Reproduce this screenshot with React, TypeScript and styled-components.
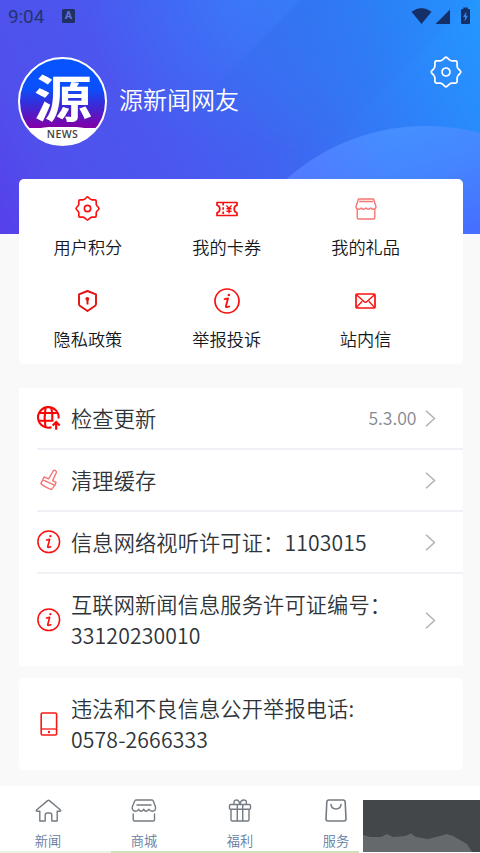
import React from "react";
import styled, { createGlobalStyle } from "styled-components";

const GlobalStyle = createGlobalStyle`
  * { box-sizing: border-box; }
  html, body { margin: 0; padding: 0; overflow: hidden; }
  body { font-family: "Noto Sans CJK SC", "Noto Sans", sans-serif; font-weight: 350; }
  svg { display: block; overflow: visible; }
`;

const Screen = styled.div`
  width: 480px;
  height: 853px;
  display: flex;
  flex-direction: column;
  background: #f9f9f9;
  overflow: hidden;
  position: relative;
`;

const Header = styled.header`
  position: relative;
  flex: none;
  height: 234px;
  overflow: hidden;
  background:
    radial-gradient(ellipse 150px 150px at 240px 0, rgba(60, 128, 255, 0.5), transparent 100%),
    linear-gradient(62deg, #5640ea 0%, #5050ec 14%, #4c56ef 32%, #4262f0 50%, #3576f4 68%, #2b87fb 84%, #2398ff 100%);
  &::before {
    content: "";
    position: absolute;
    inset: 0;
    background: linear-gradient(135deg, transparent 42%, rgba(40, 100, 225, 0.24) 42.4%, rgba(50, 100, 235, 0.08) 66%, transparent 66.8%);
    mask-image: linear-gradient(to top right, transparent 45%, #000 75%);
  }
`;

const Wave = styled.div`
  position: absolute;
  left: 216px;
  top: 126px;
  width: 420px;
  height: 420px;
  border-radius: 50%;
  background: linear-gradient(166deg, #4398ff 0, #4586ff 18%, #456fff 32%);
  &::after {
    content: "";
    position: absolute;
    inset: 0;
    border-radius: 50%;
    background: linear-gradient(90deg, rgba(96, 104, 255, 0.55) 15%, transparent 42%);
  }
`;

const StatusBar = styled.div`
  position: relative;
  height: 34px;
  padding: 0 9px 0 8px;
  display: flex;
  align-items: center;
  color: #253370;
`;

const Clock = styled.span`
  font: 400 19px/34px Roboto, sans-serif;
  width: 54px;
  letter-spacing: -0.1px;
`;

const KeyboardBadge = styled.span`
  width: 13px;
  height: 14px;
  margin-top: -2px;
  border-radius: 1.5px;
  background: #203064;
  color: #6673dd;
  font: 700 11px/14px Roboto, sans-serif;
  text-align: center;
`;

const Signals = styled.div`
  margin-left: auto;
  margin-top: -3px;
`;

const Profile = styled.div`
  position: relative;
  display: flex;
  align-items: flex-start;
  padding: 23px 18px 0 18px;
`;

const Avatar = styled.div`
  flex: none;
  width: 89px;
  height: 89px;
  border: 2px solid #fff;
  border-radius: 50%;
  overflow: hidden;
  background:
    radial-gradient(ellipse 120px 30px at 50% 98px, #fff 0 99%, transparent 100%),
    linear-gradient(#0754ff 0%, #0950fb 34%, #3b2ad6 55%, #8000a8 80%);
  display: flex;
  flex-direction: column;
  align-items: center;
`;

const LogoGlyph = styled.span`
  color: #fff;
  font-weight: 700;
  font-size: 50px;
  line-height: 48px;
  height: 48px;
  margin: 12px 0 9px;
  transform: scaleX(1.16);
`;

const LogoCaption = styled.span`
  color: #444;
  font: 600 10.5px/12px "Open Sans", sans-serif;
  letter-spacing: 0.4px;
`;

const UserName = styled.span`
  margin: 28px 0 0 12px;
  font-size: 24px;
  line-height: 28px;
  color: #fff;
`;

const SettingsButton = styled.button`
  all: unset;
  margin: -1px 0 0 auto;
`;

const Content = styled.main`
  position: relative;
  flex: none;
  margin-top: -55px;
  padding: 0 17.5px 0 18.5px;
  height: 606.5px;
`;

const ShortcutCard = styled.section`
  height: 185px;
  padding-right: 27.5px;
  border-radius: 5px;
  background: #fff;
  display: grid;
  grid-template-columns: repeat(3, 1fr);
  grid-template-rows: 92.5px 92.5px;
`;

const Shortcut = styled.div`
  display: flex;
  flex-direction: column;
  align-items: center;
  padding-top: 13.6px;
  gap: 9px;
  color: #14181c;
  font-size: 17.2px;
  line-height: 26px;
`;

const IconBox = styled.span<{ $width: number; $height: number }>`
  flex: none;
  width: ${(p) => p.$width}px;
  height: ${(p) => p.$height}px;
  display: grid;
  place-items: center;
`;

const ListCard = styled.section<{ $gap: number; $radius: number }>`
  margin-top: ${(p) => p.$gap}px;
  padding-left: 18.5px;
  border-radius: ${(p) => p.$radius}px;
  background: #fff;
`;

const Row = styled.div<{ $height: number; $last?: boolean }>`
  height: ${(p) => p.$height}px;
  display: flex;
  align-items: center;
  padding-right: 27px;
  border-bottom: ${(p) => (p.$last ? "0" : "2px solid #f0f1f7")};
`;

const RowLabel = styled.span`
  flex: 1;
  margin-left: 10px;
  padding-bottom: 2px;
  white-space: pre-line;
  color: #2e3438;
  font-size: 21.2px;
  line-height: 31px;
  letter-spacing: 0.15px;
`;

const Version = styled.span`
  margin-right: 8px;
  padding-bottom: 1px;
  color: #85898e;
  font-size: 17.6px;
`;

const TabBar = styled.nav`
  position: relative;
  height: 67.5px;
  background: #fff;
  display: grid;
  grid-template-columns: repeat(5, 96px);
`;

const Tab = styled.div`
  display: flex;
  flex-direction: column;
  align-items: center;
  padding-top: 12.5px;
  gap: 6.5px;
  font-size: 13.2px;
  line-height: 20px;
  color: #647ba0;
`;

const BottomEdge = styled.div`
  position: absolute;
  left: 0;
  bottom: 0;
  width: 359px;
  height: 2px;
  background: linear-gradient(90deg, #edf1e2 111px, #cfdfb7 111px);
`;

const GraphOverlay = styled.div`
  position: absolute;
  left: 363px;
  top: 800px;
  width: 117px;
  height: 52px;
  background: #434749;
`;

type Draw = { color?: string; size?: number; weight?: number };

const Gear = ({ color = "#fa1010", size = 25, weight = 2.1 }: Draw) => (
  <svg width={size} height={size} viewBox="-16 -16 32 32" fill="none" stroke={color} strokeWidth={weight} strokeLinejoin="round">
    <path d="M-1.3-14.1Q0-15.4 1.3-14.1L3.2-12.3Q4.6-11.1 6-11.1H9.6Q11.1-11.1 11.1-9.6V-6Q11.1-4.6 12.3-3.2L14.1-1.3Q15.4 0 14.1 1.3L12.3 3.2Q11.1 4.6 11.1 6V9.6Q11.1 11.1 9.6 11.1H6Q4.6 11.1 3.2 12.3L1.3 14.1Q0 15.4-1.3 14.1L-3.2 12.3Q-4.6 11.1-6 11.1H-9.6Q-11.1 11.1-11.1 9.6V6Q-11.1 4.6-12.3 3.2L-14.1 1.3Q-15.4 0-14.1-1.3L-12.3-3.2Q-11.1-4.6-11.1-6V-9.6Q-11.1-11.1-9.6-11.1H-6Q-4.6-11.1-3.2-12.3Z" />
    <circle r="4" />
  </svg>
);

const Ticket = () => (
  <svg width="22" height="16" viewBox="0 0 22 16" fill="none" stroke="#f61010" strokeWidth="1.7" strokeLinejoin="round">
    <path d="M1 1.5H21V4.3Q18.2 5 18.2 8T21 11.7V14.5H1V11.7Q3.8 11 3.8 8T1 4.3Z" />
    <path d="M7.2 2V14" strokeDasharray="2.6 1.6" />
    <path d="M10.4 4.4L13 7.5L15.6 4.4M13 7.5V12.5M10.5 7.8H15.5M10.5 10.2H15.5" strokeWidth="1.4" />
  </svg>
);

const GiftShop = () => (
  <svg width="22" height="22" viewBox="0 0 22 22" fill="none" stroke="#f77676" strokeWidth="1.4" strokeLinejoin="round">
    <path d="M3.5 1H18.5L21 8.5Q21 11.2 18.4 11.2Q16.6 11.2 15.8 10Q14.5 11.5 13 11.2Q12 11 11 10Q9.7 11.5 8 11.2Q7 11 6.2 10Q5 11.3 3.4 11.2Q1 11 1 8.5Z" />
    <path d="M4.2 3.5H18M2.2 11.2V19.5Q2.2 21 3.7 21H18.3Q19.8 21 19.8 19.5V11.2" />
  </svg>
);

const Shield = () => (
  <svg width="19" height="22" viewBox="0 0 19 22" fill="none" stroke="#e01212" strokeWidth="1.9" strokeLinejoin="round">
    <path d="M9.5 1L18 4.3V14Q18 15 17.2 15.7L9.5 21L1.8 15.7Q1 15 1 14V4.3Z" />
    <path d="M9.5 8V14.5" strokeWidth="2" />
    <circle cx="9.3" cy="8.8" r="1.9" fill="#e01212" stroke="none" />
  </svg>
);

const Info = ({ size = 25 }: Draw) => (
  <svg width={size} height={size} viewBox="0 0 26 26" fill="none" stroke="#fa0f0f" strokeWidth="1.7" strokeLinecap="round" strokeLinejoin="round">
    <circle cx="13" cy="13" r="12" />
    <path d="M10.6 11.1L14 10.4L11.9 18.2Q11.8 19.5 13.1 19.1L15.2 18.5" strokeWidth="1.8" />
    <circle cx="14.8" cy="6.9" r="1.25" fill="#fa0f0f" stroke="none" />
  </svg>
);

const Mail = () => (
  <svg width="21" height="16" viewBox="0 0 21 16" fill="none" stroke="#fa0f0f" strokeWidth="1.7" strokeLinejoin="round">
    <rect x="1" y="1" width="19" height="14" rx="1" />
    <path d="M1.5 1.8L9 8.6Q10.5 9.8 12 8.6L19.5 1.8M1.5 14.4L7.2 8.2M19.5 14.4L13.8 8.2" strokeWidth="1.4" />
  </svg>
);

const GlobeUp = () => (
  <svg width="24" height="24" viewBox="0 0 24 24" fill="none" stroke="#f90505" strokeWidth="2.1">
    <path d="M21.6 12.5A10.3 10.3 0 1 0 14.5 21.2" />
    <path d="M2.5 7H20M1 14.8H16.5M8.5 1.7Q6.8 11.5 8.5 21.5M14.3 1.7Q15.8 8 15.3 14.8" />
    <path d="M19.2 23.8V17M15.7 19.5L19.2 16L22.7 19.5" strokeWidth="2.2" />
  </svg>
);

const Brush = () => (
  <svg width="18" height="22" viewBox="0 0 18 22" fill="none" stroke="#f57575" strokeWidth="1.4" strokeLinejoin="round">
    <path d="M4 8L8.6 9.8L13.2 2Q14.2.8 15.4 1.5Q16.8 2.3 16.3 3.8L12.6 11.6L16 13.4L14.8 16.4L2.8 10.8Z" />
    <path d="M2.8 10.8L.8 14.6Q4 18 11.4 20.6L14.8 16.4" />
  </svg>
);

const Phone = () => (
  <svg width="18" height="24" viewBox="0 0 18 24" fill="none" stroke="#f71818" strokeWidth="1.6">
    <rect x="1.2" y="1" width="15.4" height="22" rx="1.2" />
    <path d="M1.2 17H16.6" strokeWidth="1.3" />
    <circle cx="9" cy="20" r="1.2" fill="#f71818" stroke="none" />
  </svg>
);

const Chevron = () => (
  <svg width="11" height="17" viewBox="0 0 11 17" fill="none" stroke="#b0b2b4" strokeWidth="1.5">
    <path d="M1 .7L9.5 8.5L1 16.3" />
  </svg>
);

const line = { fill: "none", stroke: "#747b82", strokeWidth: 1.4, strokeLinejoin: "round", strokeLinecap: "round" } as const;

const Home = () => (
  <svg width="27" height="26" viewBox="0 0 27 26" {...line}>
    <path d="M4.8 13.2H1.8Q.8 12.8 1.8 11.8L12.6 2.6Q13.5 2 14.4 2.6L25.2 11.8Q26.2 12.8 25.2 13.2H22.2V23H16.8V17Q16.8 15 14.8 15H12.2Q10.2 15 10.2 17V23H4.8Z" />
  </svg>
);

const Mall = () => (
  <svg width="26" height="26" viewBox="0 0 26 26" {...line}>
    <path d="M5 2H21Q22 2 22.3 3L24.5 9Q25 13 21.5 13.2Q18.8 13.2 18 11.2Q16.5 13.5 14.8 13.2Q13.5 13 12.8 11.2Q11.5 13.5 9.8 13.2Q8.3 13 7.7 11.2Q6.5 13.5 4.4 13.2Q1 13 1.2 9L3.7 3Q4 2 5 2Z" />
    <path d="M6 7H20M2.2 16V21.5Q2.2 23 3.7 23H22Q23.5 23 23.5 21.5V16" />
  </svg>
);

const Gift = () => (
  <svg width="24" height="26" viewBox="0 0 24 26" {...line}>
    <path d="M2.5 6.5H21.5Q22.5 6.5 22.5 7.5V10.3Q22.5 11.3 21.5 11.3H2.5Q1.5 11.3 1.5 10.3V7.5Q1.5 6.5 2.5 6.5ZM3 11.3V21.5Q3 23 4.5 23H19.5Q21 23 21 21.5V11.3M9.3 6.5V23M14.7 6.5V23M6.2 6.5Q5 2 8.5 2Q11 2 12 6.5Q12.5 2 16 2Q19.5 2 18 6.5" />
  </svg>
);

const Bag = () => (
  <svg width="22" height="26" viewBox="0 0 22 26" {...line} strokeWidth={1.6}>
    <path d="M4 2H18Q20 2 20.2 4L21 21Q21 23 19 23H3Q1 23 1 21L1.8 4Q2 2 4 2Z" />
    <path d="M6 6.5Q6.6 11 11 11T16 6.5" />
  </svg>
);

const StatusIcons = () => (
  <svg width="60" height="18" viewBox="0 0 60 18" fill="#152f68">
    <path d="M.5 4.7Q10.5-2.5 20.5 4.7L10.5 17Z" />
    <path d="M39 2.5V17H24.5Z" />
    <path d="M51 2H52.3V.5H56.7V2H58Q59 2 59 3V16Q59 17 58 17H51Q50 17 50 16V3Q50 2 51 2Z" />
    <path d="M55.5 4.5L52 10H54L53.5 14.5L57 8.7H55Z" fill="#3187ee" />
  </svg>
);

const shortcuts = [
  { label: "用户积分", icon: <Gear /> },
  { label: "我的卡券", icon: <Ticket /> },
  { label: "我的礼品", icon: <GiftShop /> },
  { label: "隐私政策", icon: <Shield /> },
  { label: "举报投诉", icon: <Info size={26} /> },
  { label: "站内信", icon: <Mail /> },
];

const rows = [
  { label: "检查更新", icon: <GlobeUp />, height: 62, version: "5.3.00" },
  { label: "清理缓存", icon: <Brush />, height: 62 },
  { label: "信息网络视听许可证：1103015", icon: <Info size={23.5} />, height: 62 },
  { label: "互联网新闻信息服务许可证编号：\n33120230010", icon: <Info size={23.5} />, height: 92 },
];

const tabs = [
  { label: "新闻", icon: <Home /> },
  { label: "商城", icon: <Mall /> },
  { label: "福利", icon: <Gift /> },
  { label: "服务", icon: <Bag /> },
];

export default function App() {
  return (
    <Screen>
      <GlobalStyle />
      <Header>
        <Wave />
        <StatusBar>
          <Clock>9:04</Clock>
          <KeyboardBadge>A</KeyboardBadge>
          <Signals><StatusIcons /></Signals>
        </StatusBar>
        <Profile>
          <Avatar>
            <LogoGlyph>源</LogoGlyph>
            <LogoCaption>NEWS</LogoCaption>
          </Avatar>
          <UserName>源新闻网友</UserName>
          <SettingsButton aria-label="设置"><Gear color="#fff" size={32} weight={1.7} /></SettingsButton>
        </Profile>
      </Header>
      <Content>
        <ShortcutCard>
          {shortcuts.map((s) => (
            <Shortcut key={s.label}>
              <IconBox $width={32} $height={32}>{s.icon}</IconBox>
              {s.label}
            </Shortcut>
          ))}
        </ShortcutCard>
        <ListCard $gap={24} $radius={1}>
          {rows.map((r, i) => (
            <Row key={r.label} $height={r.height} $last={i === rows.length - 1}>
              <IconBox $width={24} $height={24}>{r.icon}</IconBox>
              <RowLabel>{r.label}</RowLabel>
              {r.version && <Version>{r.version}</Version>}
              <Chevron />
            </Row>
          ))}
        </ListCard>
        <ListCard $gap={12} $radius={5}>
          <Row $height={92} $last>
            <IconBox $width={24} $height={24}><Phone /></IconBox>
            <RowLabel>{"违法和不良信息公开举报电话:\n0578-2666333"}</RowLabel>
          </Row>
        </ListCard>
      </Content>
      <TabBar>
        {tabs.map((t) => (
          <Tab key={t.label}>
            <IconBox $width={27} $height={26}>{t.icon}</IconBox>
            {t.label}
          </Tab>
        ))}
        <BottomEdge />
      </TabBar>
      <GraphOverlay>
        <svg width="117" height="52" viewBox="0 0 117 52">
          <path d="M0 35L7 37L18 37L24 34L30 37L42 36L48 33.5L53 37L65 39L77 36L84 34L90 36L97 40L104 44L109 52H0Z" fill="#66696b" />
        </svg>
      </GraphOverlay>
    </Screen>
  );
}
